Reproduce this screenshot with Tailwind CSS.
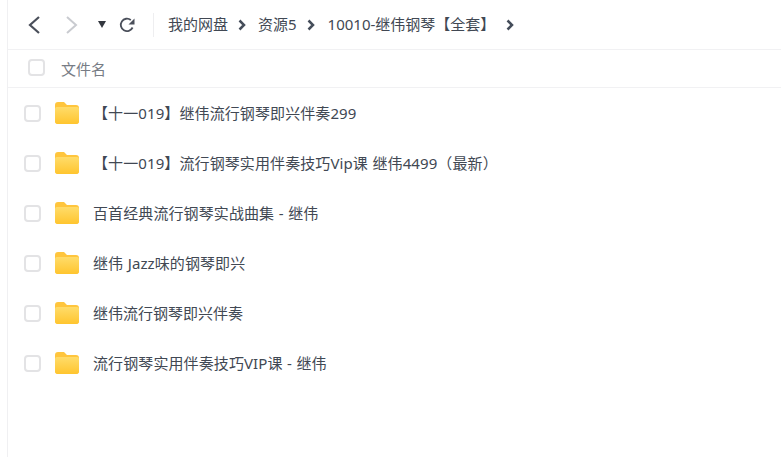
<!DOCTYPE html>
<html lang="zh">
<head>
<meta charset="utf-8">
<script src="https://cdn.jsdelivr.net/npm/@tailwindcss/browser@4"></script>
</head>
<body class="bg-white overflow-hidden">
<svg class="absolute w-0 h-0"><defs><linearGradient id="f" x1="0" y1="0" x2="0" y2="1"><stop offset="0" stop-color="#ffdc6a"/><stop offset="1" stop-color="#ffc52e"/></linearGradient></defs></svg>
<div class="w-[781px] h-[457px] overflow-hidden flex bg-white text-[#414853] font-['Noto_Sans','Noto_Sans_CJK_SC',sans-serif]">
  <div class="w-[8px] shrink-0 border-r border-[#f0f0f2]"></div>
  <div class="flex-1 flex flex-col min-w-0">
    <header class="h-[50px] shrink-0 border-b border-[#f1f1f3] flex items-center">
      <svg class="ml-[19px] w-[14px] h-[20px]" viewBox="0 0 14 20" fill="none" stroke="#4a4f5a" stroke-width="2.2"><path d="M12 2 3 10l9 8"/></svg>
      <svg class="ml-[24px] w-[14px] h-[20px]" viewBox="0 0 14 20" fill="none" stroke="#c9cbd0" stroke-width="2"><path d="M2 2l9 8-9 8"/></svg>
      <svg class="ml-[19px] w-[8px] h-[7px]" viewBox="0 0 8 7"><path d="M0 0h8L4 7z" fill="#33373f"/></svg>
      <svg class="ml-[13px] w-[16px] h-[16px]" viewBox="0 0 16 16" fill="none"><path d="M13.600 10.500A6.200 6.200 0 1 1 11.800 3" stroke="#4a4f5a" stroke-width="1.800"/><path d="M15.500 1.500v6h-6z" fill="#4a4f5a"/></svg>
      <div class="ml-[18px] w-px h-[24px] bg-[#eeeef0]"></div>
      <nav class="ml-[14px] flex items-center text-[15px] whitespace-nowrap">
        <span>我的网盘</span>
        <svg class="ml-[10px] w-[8px] h-[12px]" viewBox="0 0 8 12" fill="none" stroke="#454d5a" stroke-width="2.500"><path d="M1.500 1.500 6 6l-4.500 4.500"/></svg>
        <span class="ml-[12px]">资源5</span>
        <svg class="ml-[10px] w-[8px] h-[12px]" viewBox="0 0 8 12" fill="none" stroke="#454d5a" stroke-width="2.500"><path d="M1.500 1.500 6 6l-4.500 4.500"/></svg>
        <span class="ml-[13px]">10010-继伟钢琴【全套】</span>
        <svg class="ml-[11px] w-[8px] h-[12px]" viewBox="0 0 8 12" fill="none" stroke="#454d5a" stroke-width="2.500"><path d="M1.500 1.500 6 6l-4.500 4.500"/></svg>
      </nav>
    </header>
    <div class="h-[38px] shrink-0 border-b border-[#f1f1f3] flex items-center">
      <span class="ml-[20px] w-[17px] h-[17px] -mt-[2px] rounded-[4px] border-2 border-[#e3e3e5] bg-white"></span>
      <span class="ml-[16px] mt-[1px] text-[15px] text-[#777c85]">文件名</span>
    </div>
    <ul class="flex flex-col">
      <li class="h-[50px] flex items-center"><span class="ml-[16px] w-[17px] h-[17px] rounded-[4px] border-2 border-[#e3e3e5]"></span><svg class="ml-[13px] w-[26px] h-[23px] -mt-[2px]" viewBox="0 0 26 23"><path d="M1 4a3 3 0 0 1 3-3h6l3 3h9a3 3 0 0 1 3 3v13a3 3 0 0 1-3 3H4a3 3 0 0 1-3-3z" fill="#ffc53d"/><path d="M1 8a2 2 0 0 1 2-2h20a2 2 0 0 1 2 2v12a3 3 0 0 1-3 3H4a3 3 0 0 1-3-3z" fill="url(#f)"/></svg><span class="ml-[13px] text-[15px] whitespace-nowrap tracking-[0.1px] [word-spacing:0.5px]">【十一019】继伟流行钢琴即兴伴奏299</span></li>
      <li class="h-[50px] flex items-center"><span class="ml-[16px] w-[17px] h-[17px] rounded-[4px] border-2 border-[#e3e3e5]"></span><svg class="ml-[13px] w-[26px] h-[23px] -mt-[2px]" viewBox="0 0 26 23"><path d="M1 4a3 3 0 0 1 3-3h6l3 3h9a3 3 0 0 1 3 3v13a3 3 0 0 1-3 3H4a3 3 0 0 1-3-3z" fill="#ffc53d"/><path d="M1 8a2 2 0 0 1 2-2h20a2 2 0 0 1 2 2v12a3 3 0 0 1-3 3H4a3 3 0 0 1-3-3z" fill="url(#f)"/></svg><span class="ml-[13px] text-[15px] whitespace-nowrap tracking-[0.1px] [word-spacing:0.5px]">【十一019】流行钢琴实用伴奏技巧Vip课 继伟4499（最新）</span></li>
      <li class="h-[50px] flex items-center"><span class="ml-[16px] w-[17px] h-[17px] rounded-[4px] border-2 border-[#e3e3e5]"></span><svg class="ml-[13px] w-[26px] h-[23px] -mt-[2px]" viewBox="0 0 26 23"><path d="M1 4a3 3 0 0 1 3-3h6l3 3h9a3 3 0 0 1 3 3v13a3 3 0 0 1-3 3H4a3 3 0 0 1-3-3z" fill="#ffc53d"/><path d="M1 8a2 2 0 0 1 2-2h20a2 2 0 0 1 2 2v12a3 3 0 0 1-3 3H4a3 3 0 0 1-3-3z" fill="url(#f)"/></svg><span class="ml-[13px] text-[15px] whitespace-nowrap tracking-[0.1px] [word-spacing:0.5px]">百首经典流行钢琴实战曲集 - 继伟</span></li>
      <li class="h-[50px] flex items-center"><span class="ml-[16px] w-[17px] h-[17px] rounded-[4px] border-2 border-[#e3e3e5]"></span><svg class="ml-[13px] w-[26px] h-[23px] -mt-[2px]" viewBox="0 0 26 23"><path d="M1 4a3 3 0 0 1 3-3h6l3 3h9a3 3 0 0 1 3 3v13a3 3 0 0 1-3 3H4a3 3 0 0 1-3-3z" fill="#ffc53d"/><path d="M1 8a2 2 0 0 1 2-2h20a2 2 0 0 1 2 2v12a3 3 0 0 1-3 3H4a3 3 0 0 1-3-3z" fill="url(#f)"/></svg><span class="ml-[13px] text-[15px] whitespace-nowrap tracking-[0.1px] [word-spacing:0.5px]">继伟 Jazz味的钢琴即兴</span></li>
      <li class="h-[50px] flex items-center"><span class="ml-[16px] w-[17px] h-[17px] rounded-[4px] border-2 border-[#e3e3e5]"></span><svg class="ml-[13px] w-[26px] h-[23px] -mt-[2px]" viewBox="0 0 26 23"><path d="M1 4a3 3 0 0 1 3-3h6l3 3h9a3 3 0 0 1 3 3v13a3 3 0 0 1-3 3H4a3 3 0 0 1-3-3z" fill="#ffc53d"/><path d="M1 8a2 2 0 0 1 2-2h20a2 2 0 0 1 2 2v12a3 3 0 0 1-3 3H4a3 3 0 0 1-3-3z" fill="url(#f)"/></svg><span class="ml-[13px] text-[15px] whitespace-nowrap">继伟流行钢琴即兴伴奏</span></li>
      <li class="h-[50px] flex items-center"><span class="ml-[16px] w-[17px] h-[17px] rounded-[4px] border-2 border-[#e3e3e5]"></span><svg class="ml-[13px] w-[26px] h-[23px] -mt-[2px]" viewBox="0 0 26 23"><path d="M1 4a3 3 0 0 1 3-3h6l3 3h9a3 3 0 0 1 3 3v13a3 3 0 0 1-3 3H4a3 3 0 0 1-3-3z" fill="#ffc53d"/><path d="M1 8a2 2 0 0 1 2-2h20a2 2 0 0 1 2 2v12a3 3 0 0 1-3 3H4a3 3 0 0 1-3-3z" fill="url(#f)"/></svg><span class="ml-[13px] text-[15px] whitespace-nowrap tracking-[0.1px] [word-spacing:0.5px]">流行钢琴实用伴奏技巧VIP课 - 继伟</span></li>
    </ul>
  </div>
</div>
</body>
</html>
